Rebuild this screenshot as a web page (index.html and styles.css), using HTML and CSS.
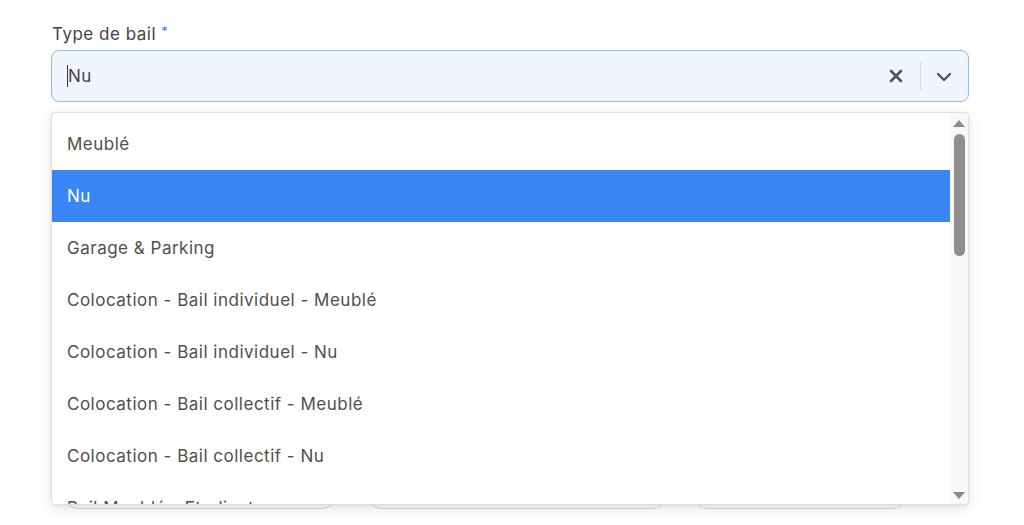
FILE: index.html
```html
<!DOCTYPE html>
<html lang="fr">
<head>
<meta charset="utf-8">
<title>Type de bail</title>
<link rel="stylesheet" href="styles.css">
</head>
<body>
<div class="page">
  <div class="field">
    <label class="label">Type de bail <span class="req">*</span></label>
    <div class="control">
      <div class="value"><span class="caret"></span>Nu</div>
      <div class="indicators">
        <span class="clear">
          <svg width="14" height="14" viewBox="0 0 14 14"><path d="M2 2 L12 12 M12 2 L2 12" stroke="#555" stroke-width="2.6" stroke-linecap="round"/></svg>
        </span>
        <span class="sep"></span>
        <span class="chev">
          <svg width="16" height="10" viewBox="0 0 16 10"><path d="M2 2 L8 8 L14 2" fill="none" stroke="#555" stroke-width="2.4" stroke-linecap="round" stroke-linejoin="round"/></svg>
        </span>
      </div>
    </div>
    <div class="menu">
      <div class="options">
        <div class="opt">Meublé</div>
        <div class="opt sel">Nu</div>
        <div class="opt">Garage &amp; Parking</div>
        <div class="opt">Colocation - Bail individuel - Meublé</div>
        <div class="opt">Colocation - Bail individuel - Nu</div>
        <div class="opt">Colocation - Bail collectif - Meublé</div>
        <div class="opt">Colocation - Bail collectif - Nu</div>
        <div class="opt">Bail Meublé - Etudiant</div>
      </div>
      <div class="sbar">
        <span class="arr up"></span>
        <span class="track"><span class="thumb"></span></span>
        <span class="arr down"></span>
      </div>
    </div>
  </div>
  <div class="behind">
    <span class="pill p1"></span>
    <span class="pill p2"></span>
    <span class="pill p3"></span>
  </div>
</div>
</body>
</html>
```
FILE: styles.css
```css
html, body {
  margin: 0;
  padding: 0;
  background: #fff;
}
body {
  font-family: Inter, "Open Sans", "Liberation Sans", sans-serif;
  color: #4d4a49;
  letter-spacing: 0.5px;
}
.page {
  width: 1013px;
  height: 525px;
  padding: 18px 0 0 51px;
  box-sizing: border-box;
  overflow: hidden;
}
.field {
  position: relative;
  width: 918px;
}
.label {
  display: block;
  font-size: 17px;
  line-height: 26px;
  color: #4a4240;
  margin-left: 1px;
  margin-bottom: 3px;
}
.req {
  color: #3b82f6;
  font-size: 13px;
  vertical-align: 4px;
}
.control {
  height: 52px;
  box-sizing: border-box;
  border: 1px solid #8fb8f6;
  border-radius: 8px;
  background: #f0f5fe;
  display: flex;
  align-items: center;
  padding-left: 15px;
}
.value {
  flex: 1;
  font-size: 17px;
  color: #4a4240;
  display: flex;
  align-items: center;
}
.caret {
  width: 1px;
  height: 22px;
  background: #333;
}
.indicators {
  display: flex;
  align-items: center;
  height: 100%;
}
.clear {
  display: flex;
  width: 14px;
  margin-right: 17px;
}
.sep {
  width: 1px;
  height: 28px;
  background: #d6d8dc;
}
.chev {
  display: flex;
  width: 16px;
  margin: 2px 16px 0 15px;
}
.menu {
  position: absolute;
  top: 94px;
  left: 0;
  width: 918px;
  height: 393px;
  box-sizing: border-box;
  background: #fff;
  border: 1px solid #dedede;
  border-radius: 4px;
  box-shadow: 0 4px 14px rgba(0,0,0,0.10), 0 1px 3px rgba(0,0,0,0.06);
  display: flex;
  overflow: hidden;
  z-index: 2;
}
.options {
  flex: 1;
  overflow: hidden;
  padding-top: 5px;
}
.opt {
  height: 52px;
  line-height: 52px;
  padding-left: 15px;
  font-size: 17px;
  color: #524e4d;
  white-space: nowrap;
}
.opt.sel {
  background: #3b86f7;
  color: #fff;
}
.sbar {
  width: 18px;
  background: #f8f8f8;
  display: flex;
  flex-direction: column;
  align-items: center;
}
.arr {
  width: 0;
  height: 0;
  border-left: 6px solid transparent;
  border-right: 6px solid transparent;
}
.arr.up {
  border-bottom: 7px solid #8a8a8a;
  margin-top: 7px;
}
.arr.down {
  border-top: 7px solid #8a8a8a;
  margin-bottom: 5px;
}
.track {
  flex: 1;
  width: 100%;
  display: flex;
  justify-content: center;
  padding-top: 7px;
}
.thumb {
  width: 11px;
  height: 122px;
  border-radius: 6px;
  background: #8e8e8e;
}
.behind {
  display: flex;
  gap: 33px;
  margin-top: 377px;
  padding-left: 14px;
}
.pill {
  height: 30px;
  border: 1px solid #dcdce0;
  border-radius: 12px;
  box-sizing: border-box;
}
.p1 { width: 270px; }
.p2 { width: 297px; }
.p3 { width: 210px; margin-left: -3px; }
```
